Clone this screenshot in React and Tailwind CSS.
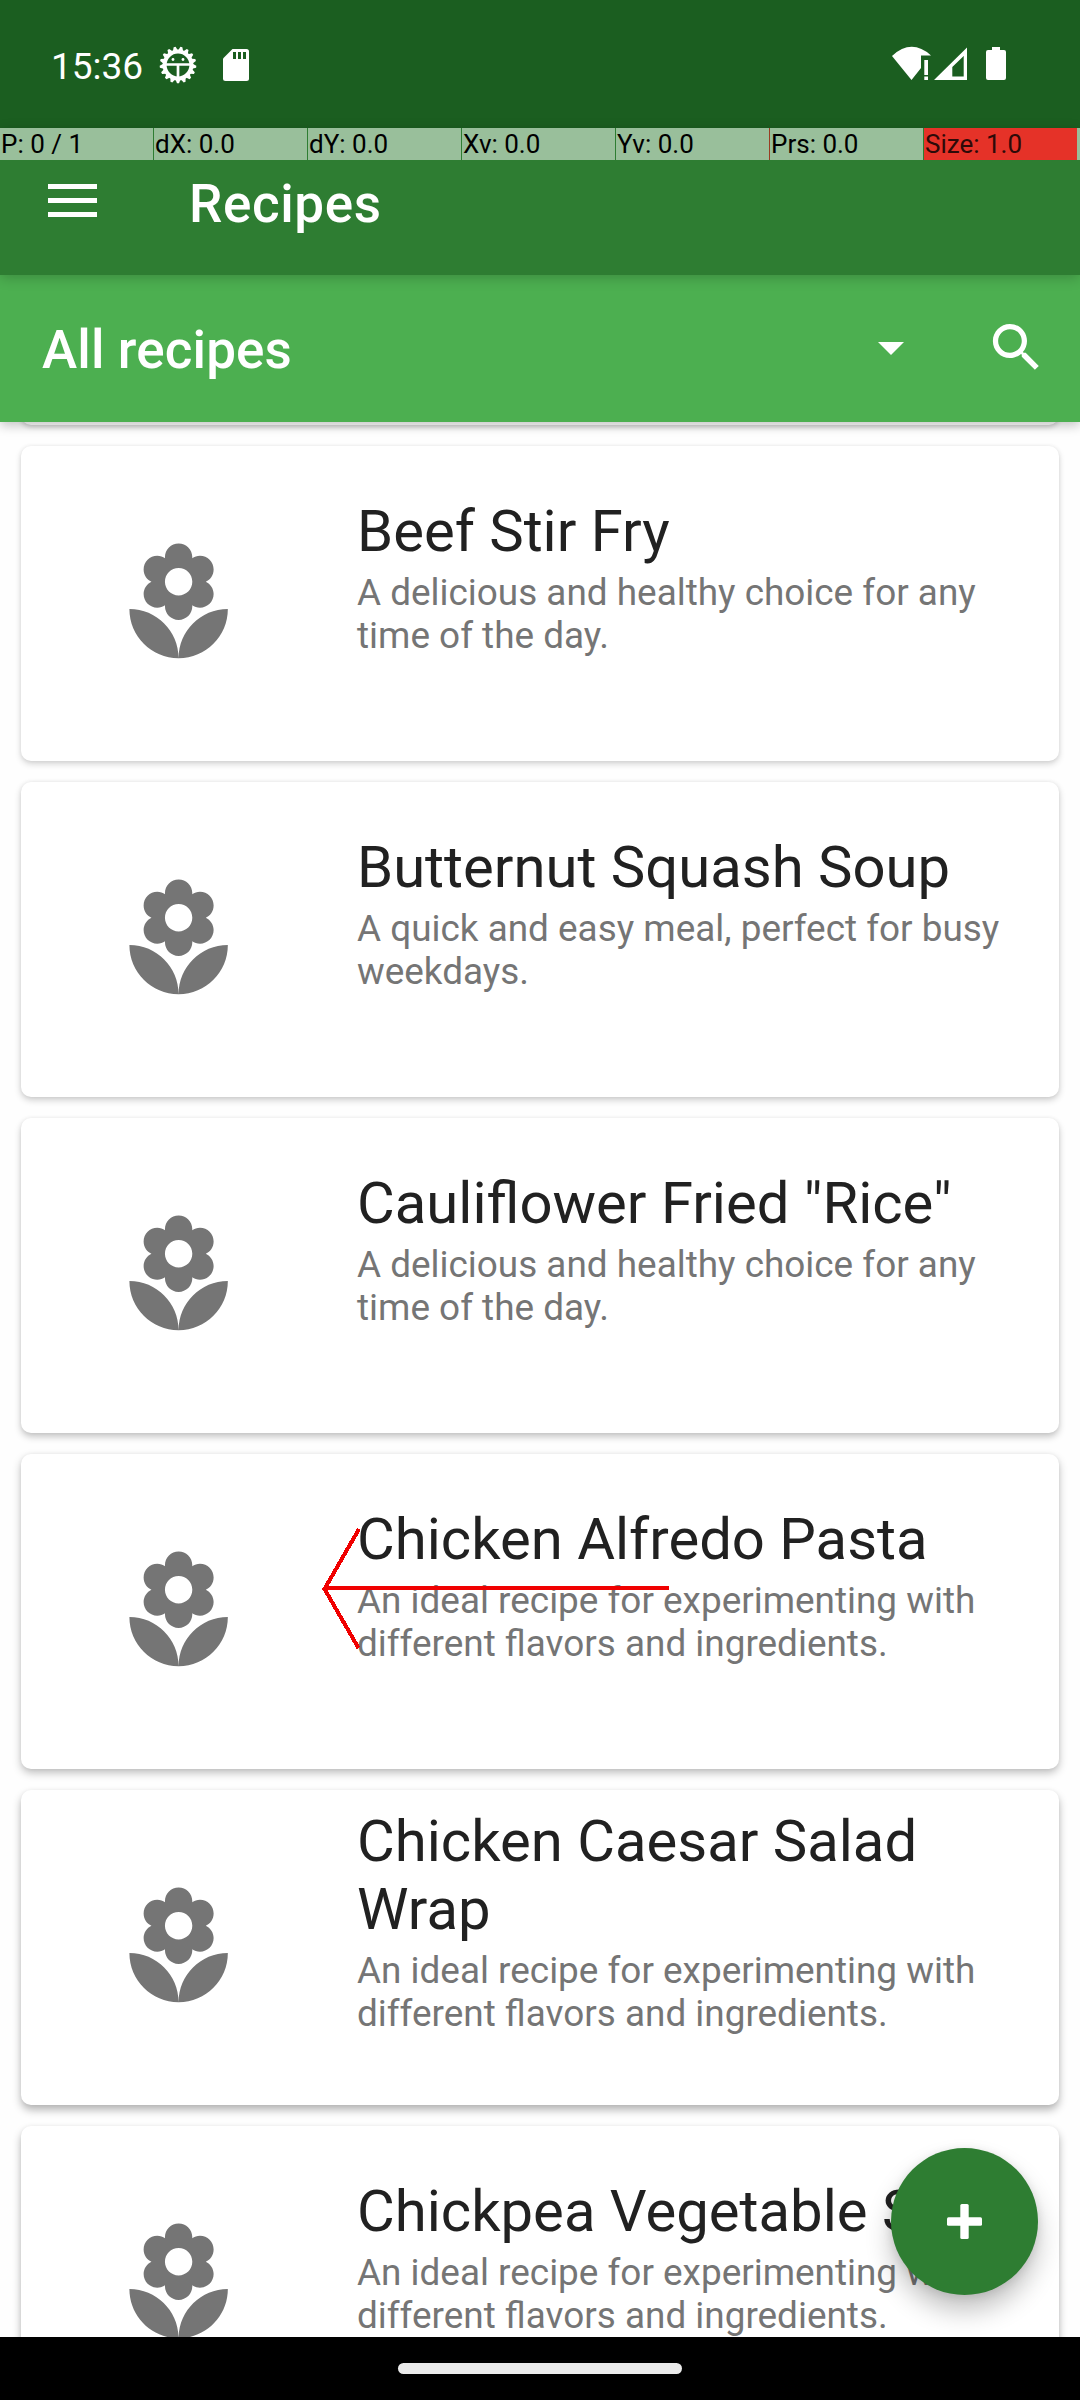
const recipes = [
  { title: "Beef Stir Fry", text: "A delicious and healthy choice for any time of the day.", shadow: "shadow-[0_3px_6px_rgba(0,0,0,0.17),0_0_4px_rgba(0,0,0,0.06)]" },
  { title: "Butternut Squash Soup", text: "A quick and easy meal, perfect for busy weekdays.", shadow: "shadow-[0_3px_7px_rgba(0,0,0,0.2),0_0_4px_rgba(0,0,0,0.06)]" },
  { title: "Cauliflower Fried \"Rice\"", text: "A delicious and healthy choice for any time of the day.", shadow: "shadow-[0_4px_7px_rgba(0,0,0,0.22),0_0_4px_rgba(0,0,0,0.06)]" },
  { title: "Chicken Alfredo Pasta", text: "An ideal recipe for experimenting with different flavors and ingredients.", shadow: "shadow-[0_4px_8px_rgba(0,0,0,0.25),0_0_4px_rgba(0,0,0,0.05)]" },
  { title: "Chicken Caesar Salad Wrap", text: "An ideal recipe for experimenting with different flavors and ingredients.", shadow: "shadow-[0_5px_9px_rgba(0,0,0,0.29),0_0_4px_rgba(0,0,0,0.04)]" },
  { title: "Chickpea Vegetable Soup", text: "An ideal recipe for experimenting with different flavors and ingredients.", shadow: "shadow-[0_5px_9px_rgba(0,0,0,0.29),0_0_4px_rgba(0,0,0,0.04)]" },
];

const pointerCells = ["P: 0 / 1", "dX: 0.0", "dY: 0.0", "Xv: 0.0", "Yv: 0.0", "Prs: 0.0", "Size: 1.0"];

function Flower() {
  return (
    <svg className="size-[131.25px]" viewBox="0 0 24 24" fill="#757575">
      <path d="M12 22c4.97 0 9-4.03 9-9-4.97 0-9 4.03-9 9zM5.6 10.25c0 1.38 1.12 2.5 2.5 2.5.53 0 1.01-.16 1.42-.44l-.02.19c0 1.38 1.12 2.5 2.5 2.5s2.5-1.12 2.5-2.5l-.02-.19c.4.28.89.44 1.42.44 1.38 0 2.5-1.12 2.5-2.5 0-1-.59-1.85-1.43-2.25.84-.4 1.43-1.25 1.43-2.25 0-1.38-1.12-2.5-2.5-2.5-.53 0-1.01.16-1.42.44l.02-.19C14.5 2.12 13.38 1 12 1S9.5 2.12 9.5 3.5l.02.19c-.4-.28-.89-.44-1.42-.44-1.38 0-2.5 1.12-2.5 2.5 0 1 .59 1.85 1.43 2.25-.84.4-1.43 1.25-1.43 2.25zM12 5.5c1.38 0 2.5 1.12 2.5 2.5s-1.12 2.5-2.5 2.5S9.5 9.38 9.5 8s1.12-2.5 2.5-2.5zM3 13c0 4.97 4.03 9 9 9 0-4.97-4.03-9-9-9z" />
    </svg>
  );
}

function DebugIcon() {
  const teeth = Array.from({ length: 17 }, (_, i) => 180 + (i * 360) / 17);
  return (
    <svg className="ml-4 mt-0.5 size-[38px]" viewBox="-19 -19 38 38" fill="none" stroke="#fff">
      <circle r="13.4" strokeWidth="4" />
      {teeth.map((a) => (
        <path key={a} d="M-2.5 -14.5L-1 -18.3H1L2.5 -14.5Z" fill="#fff" stroke="none" transform={`rotate(${a})`} />
      ))}
      <path d="M-13 -0.500H13M0 0V13" strokeWidth="2.700" />
      <circle cx="-5" cy="-5.500" r="1.400" fill="#fff" stroke="none" />
      <circle cx="5" cy="-5.500" r="1.400" fill="#fff" stroke="none" />
    </svg>
  );
}

function StatusBar() {
  return (
    <div className="flex h-32 items-center bg-[#1b5e20] pl-[51px] pr-[34px]">
      <span className="mt-1.5 text-[37px] leading-[44px] text-white">15:36</span>
      <DebugIcon />
      <svg className="ml-[26px] mt-0.5 h-8 w-[26px]" viewBox="0 0 26 32">
        <path d="M9.5 0H23.5Q26 0 26 2.5V29.500Q26 32 23.500 32H2.500Q0 32 0 29.500V9.500Z" fill="#fff" />
        <path d="M10 3h3v7h-3zM15 3h3v7h-3zM20 3h3v7h-3z" fill="#1b5e20" />
      </svg>
      <svg className="-mt-0.5 ml-auto h-[34px] w-[115px]" viewBox="891 46 115 34" fill="#fff">
        <path d="M892 56Q911.500 38 931 55.500H921V68L911.500 80Z" />
        <path d="M924.300 60h3.700v15h-3.700zM924.300 76.500h3.700v3.500h-3.700z" />
        <path fillRule="evenodd" d="M967 47.500V80H934ZM963.700 56L952.300 67V76.500H963.700Z" />
        <path d="M992 47h8v3h4q2 0 2 2V78q0 2-2 2H988q-2 0-2-2V52q0-2 2-2h4z" />
      </svg>
      <span className="w-10" />
    </div>
  );
}

function PointerBar() {
  return (
    <div className="flex h-8 gap-px overflow-hidden bg-[#2e7d32]">
      {pointerCells.map((t, i) => (
        <div
          key={t}
          className={
            i === 6
              ? "w-[153px] shrink-0 bg-[#e53228] pl-px text-[26px] leading-[33px] text-[#2d0a08]"
              : i === 4
                ? "w-[153px] shrink-0 bg-[#99bf9b] pl-px text-[26px] leading-[33px] text-black shadow-[1px_0_0_#9a3d22]"
                : "w-[153px] shrink-0 bg-[#99bf9b] pl-px text-[26px] leading-[33px] text-black"
          }
        >
          {t}
        </div>
      ))}
      <div className="-ml-px w-[3px] shrink-0 bg-[#99bf9b]" />
    </div>
  );
}

function RecipeCard({ title, text, shadow }) {
  return (
    <article className={`flex h-[315px] shrink-0 rounded-[10px] bg-white ${shadow}`}>
      <div className="flex w-[315px] shrink-0 items-center justify-center">
        <Flower />
      </div>
      <div className="flex flex-1 flex-col justify-center pb-[53px] pl-[21px] pr-[21px]">
        <h2 className="text-[58px] leading-[68px] text-[#212121]">{title}</h2>
        <p className="mt-1.5 text-[36.9px] leading-[43px] text-[#757575]">{text}</p>
      </div>
    </article>
  );
}

export default function App() {
  return (
    <div className="relative flex h-[2400px] w-[1080px] flex-col overflow-hidden bg-[#fefefe] font-['Roboto',sans-serif]">
      <header className="relative z-10 shadow-[0_4px_10px_rgba(0,0,0,0.22)]">
        <StatusBar />
        <div className="relative z-10 bg-[#2e7d32] shadow-[0_3px_12px_rgba(0,0,0,0.2)]">
          <PointerBar />
          <div className="flex h-[115px] items-start pl-12">
            <svg className="mt-6 h-[33px] w-[49px]" viewBox="0 0 49 33" fill="#fff">
              <path d="M0 0h49v5H0zM0 14h49v5H0zM0 28h49v5H0z" />
            </svg>
            <h1 className="ml-[92px] mt-[13px] text-[53px] font-medium leading-[62px] tracking-[0.6px] text-white">Recipes</h1>
          </div>
        </div>
        <div className="flex h-[147px] items-center bg-[#4caf50] pl-[42px] pr-8">
          <span className="mt-0.5 text-[53px] font-medium leading-[62px] tracking-[0.13px] text-white">All recipes</span>
          <svg className="ml-auto h-[13px] w-[26px]" viewBox="0 0 26 13" fill="#fff">
            <path d="M0 0h26L13 13z" />
          </svg>
          <svg className="-mt-0.5 ml-[81px] size-[63px]" viewBox="0 0 24 24" fill="#fff">
            <path d="M15.500 14h-.79l-.28-.27C15.410 12.590 16 11.110 16 9.500 16 5.910 13.090 3 9.500 3S3 5.910 3 9.500 5.910 16 9.500 16c1.610 0 3.090-.59 4.230-1.570l.27.28v.79l5 4.990L20.490 19l-4.990-5zm-6 0C7.010 14 5 11.990 5 9.500S7.010 5 9.500 5 14 7.010 14 9.500 11.990 14 9.500 14z" />
          </svg>
        </div>
      </header>
      <main className="flex min-h-0 flex-1 flex-col gap-[21px] overflow-hidden px-[21px]">
        <div className="-mt-5 h-[23px] shrink-0 rounded-[10px] bg-white shadow-[0_2px_5px_rgba(0,0,0,0.2)]" />
        {recipes.map((r) => (
          <RecipeCard key={r.title} {...r} />
        ))}
      </main>
      <nav className="relative z-20 flex h-[63px] shrink-0 items-center justify-center bg-black">
        <div className="h-[11px] w-[284px] rounded-full bg-[#ebebeb]" />
      </nav>
      <svg className="absolute left-[320px] top-[1524px] h-[130px] w-[354px]" viewBox="320 1524 354 130" fill="none" stroke="#f00000" strokeWidth="4" shapeRendering="crispEdges">
        <path d="M324 1588H669M359 1529L324.500 1589L358.500 1648" />
      </svg>
      <button className="absolute left-[891px] top-[2148px] z-10 flex size-[147px] items-center justify-center rounded-full bg-[#2e7d32] shadow-[0_16px_26px_rgba(0,0,0,0.24),0_2px_10px_rgba(0,0,0,0.1)]">
        <svg className="size-[35px]" viewBox="0 0 35 35" fill="#fff">
          <rect x="0" y="13.300" width="35" height="8.400" rx="1.500" />
          <rect x="13.300" y="0" width="8.400" height="35" rx="1.500" />
        </svg>
      </button>
    </div>
  );
}
